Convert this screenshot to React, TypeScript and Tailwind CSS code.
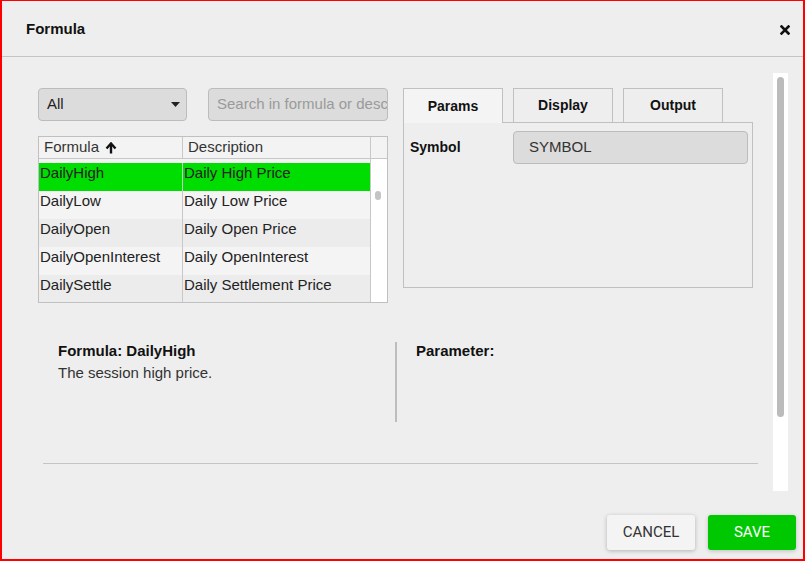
import React from "react";

const rows = [
  { f: "DailyHigh", d: "Daily High Price", bg: "bg-[#00dd00]" },
  { f: "DailyLow", d: "Daily Low Price", bg: "bg-[#f4f4f4]" },
  { f: "DailyOpen", d: "Daily Open Price", bg: "bg-[#ececec]" },
  { f: "DailyOpenInterest", d: "Daily OpenInterest", bg: "bg-[#f4f4f4]" },
  { f: "DailySettle", d: "Daily Settlement Price", bg: "bg-[#ececec]" },
];

export default function App() {
  return (
    <div className="w-[805px] h-[561px] bg-[#eeeeee] border-[#ff0000] border-t border-l-2 border-r-2 border-b-2 flex flex-col font-['Liberation_Sans',Arial,sans-serif] text-[#222] overflow-hidden">
      {/* Header */}
      <div className="h-[56px] shrink-0 border-b border-[#c4c4c4] flex items-center justify-between pl-[24px] pr-[13px]">
        <span className="text-[15px] font-bold text-[#111] mt-[1px]">Formula</span>
        <svg width="10" height="10" viewBox="0 0 10 10" className="mt-[3px]">
          <path d="M1.5 1.5 L8.5 8.5 M8.5 1.5 L1.5 8.5" stroke="#111" strokeWidth="2.6" strokeLinecap="square" />
        </svg>
      </div>

      {/* Scrollable body */}
      <div className="flex h-[443px] shrink-0">
        <div className="w-[771px] pl-[36px] pt-[31px] flex flex-col">
          <div className="flex gap-[15px]">
            {/* Left column */}
            <div className="w-[350px] flex flex-col">
              <div className="flex gap-[21px]">
                <div className="w-[149px] h-[33px] rounded-[4px] border border-[#bcbcbc] bg-[#dcdcdc] flex items-center justify-between pl-[8px] pr-[6px] text-[15px] text-[#222]">
                  <span>All</span>
                  <svg width="9" height="5" viewBox="0 0 9 5">
                    <path d="M0 0 L9 0 L4.5 5 Z" fill="#222" />
                  </svg>
                </div>
                <div className="w-[180px] h-[33px] rounded-[4px] border border-[#bcbcbc] bg-[#dcdcdc] flex items-center pl-[8px] text-[15px] text-[#9a9a9a] overflow-hidden whitespace-nowrap">
                  Search in formula or description
                </div>
              </div>

              {/* Table */}
              <div className="mt-[15px] h-[167px] border border-[#c0c0c0] bg-[#f3f3f3] flex flex-col text-[15px]">
                <div className="h-[22px] shrink-0 flex border-b border-[#c8c8c8] text-[#333]">
                  <div className="w-[144px] border-r border-[#c8c8c8] flex items-center pl-[5px] gap-[6px]">
                    <span>Formula</span>
                    <svg width="12" height="12" viewBox="0 0 12 12">
                      <path d="M6 11.5 L6 2.5" stroke="#111" strokeWidth="2.4" />
                      <path d="M1.5 6.5 L6 1.5 L10.5 6.5" stroke="#111" strokeWidth="2.4" fill="none" />
                    </svg>
                  </div>
                  <div className="w-[188px] border-r border-[#c8c8c8] flex items-center pl-[5px]">Description</div>
                  <div className="flex-1" />
                </div>
                <div className="flex-1 flex overflow-hidden">
                  <div className="w-[332px] border-r border-[#c8c8c8] flex flex-col pt-[4px] overflow-hidden">
                    {rows.map((r) => (
                      <div key={r.f} className={`h-[28px] shrink-0 flex leading-[19px] ${r.bg}`}>
                        <div className="w-[144px] border-r border-[#c8c8c8] pl-[1px] whitespace-nowrap">{r.f}</div>
                        <div className="flex-1 pl-[1px] whitespace-nowrap">{r.d}</div>
                      </div>
                    ))}
                  </div>
                  <div className="flex-1 bg-white pt-[32px] pl-[4px]">
                    <div className="w-[6px] h-[9px] rounded-[3px] bg-[#c4c4c4]" />
                  </div>
                </div>
              </div>
            </div>

            {/* Right column */}
            <div className="w-[350px] flex flex-col">
              <div className="flex gap-[10px] h-[34px] text-[14px] font-bold text-[#111]">
                <div className="w-[100px] border-t border-l border-r border-[#c0c0c0] bg-[#f4f4f4] flex items-center justify-center relative z-10 h-[35px]">Params</div>
                <div className="w-[100px] border-t border-l border-r border-[#c0c0c0] flex items-center justify-center">Display</div>
                <div className="w-[100px] border-t border-l border-r border-[#c0c0c0] flex items-center justify-center">Output</div>
              </div>
              <div className="h-[166px] border border-[#c0c0c0] pt-[8px] flex">
                <div className="w-[109px] pl-[6px] h-[33px] flex items-center text-[14px] font-bold text-[#111]">Symbol</div>
                <div className="w-[235px] h-[33px] rounded-[4px] border border-[#bcbcbc] bg-[#dcdcdc] flex items-center pl-[15px] text-[15px] text-[#333]">
                  SYMBOL
                </div>
              </div>
            </div>
          </div>

          {/* Info section */}
          <div className="flex mt-[39px] h-[81px]">
            <div className="w-[357px] pl-[20px] text-[15px] leading-[22px] -mt-[2px]">
              <div className="font-bold text-[#111]">Formula: DailyHigh</div>
              <div className="text-[#333]">The session high price.</div>
            </div>
            <div className="w-[2px] h-[80px] bg-[#bdbdbd]" />
            <div className="pl-[19px] text-[15px] leading-[22px] -mt-[2px] font-bold text-[#111]">Parameter:</div>
          </div>

          <div className="ml-[5px] mt-[40px] w-[715px] h-[1px] bg-[#c4c4c4]" />
        </div>

        {/* Outer scrollbar */}
        <div className="pt-[16px]">
          <div className="w-[15px] h-[418px] bg-white pt-[4px] pl-[4px]">
            <div className="w-[7px] h-[340px] rounded-[4px] bg-[#bbbbbb]" />
          </div>
        </div>
      </div>

      {/* Footer */}
      <div className="flex justify-end gap-[13px] pr-[7px] pt-[15px] font-['Roboto',sans-serif] text-[15px]">
        <div className="w-[88px] h-[35px] rounded-[3px] bg-[#f4f4f4] shadow-[0_1px_4px_rgba(0,0,0,0.25)] flex items-center justify-center text-[#333]">CANCEL</div>
        <div className="w-[88px] h-[35px] rounded-[3px] bg-[#00c800] shadow-[0_1px_4px_rgba(0,0,0,0.2)] flex items-center justify-center text-white">SAVE</div>
      </div>
    </div>
  );
}
